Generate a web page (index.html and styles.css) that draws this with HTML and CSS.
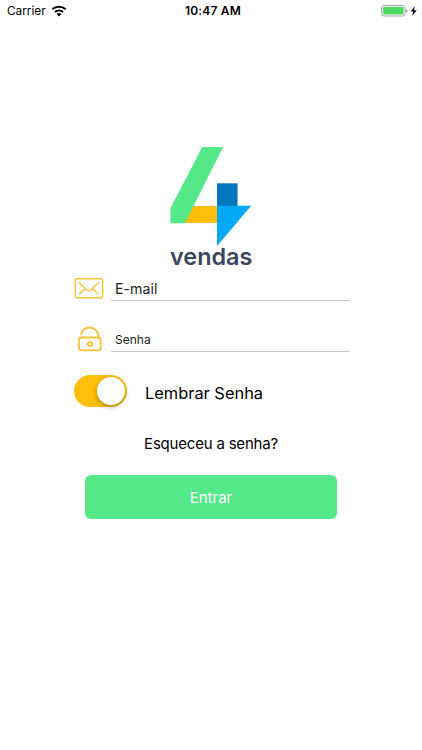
FILE: index.html
```html
<!DOCTYPE html>
<html lang="pt-BR">
<head>
	<meta charset="utf-8">
	<meta name="viewport" content="width=device-width, initial-scale=1">
	<title>4vendas</title>
	<link rel="stylesheet" href="styles.css">
</head>
<body>
<header class="statusbar">
	<div class="carrier">
		<span>Carrier</span>
		<svg width="16" height="12" viewBox="0 0 16 12">
			<path d="M1.4 4.3a9.6 9.6 0 0 1 13.2 0M3.9 7a6 6 0 0 1 8.2 0" fill="none" stroke="#000" stroke-width="2"/>
			<path d="M5.6 9.1a3.6 3.6 0 0 1 4.8 0L8 11.6z"/>
		</svg>
	</div>
	<div class="clock">10:47 AM</div>
	<div class="battery">
		<svg width="38" height="12" viewBox="0 0 38 12">
			<rect x=".5" y=".5" width="23.5" height="10.5" rx="2.5" fill="#fff" stroke="#a3a3a3"/>
			<rect x="2" y="2" width="20.5" height="7.5" rx="1.2" fill="#4cd964"/>
			<path d="M25.2 4v4q1.4-.7 1.4-2t-1.4-2z" fill="#a3a3a3"/>
			<path d="M34 1l-4.3 5.5h2.7L31.2 11l4.5-5.7h-2.8z"/>
		</svg>
	</div>
</header>

<main class="login">
	<div class="logo">
		<svg width="82" height="100" viewBox="0 0 82 100">
			<path d="M21.5 60H47v17H14z" fill="#fdbf0b"/>
			<path d="M32.2 1h21L14.8 77.2H.5V62.2z" fill="#54e888"/>
			<path d="M47 37.3h20.6V60H47z" fill="#0277bd"/>
			<path d="M47 59.8h34.2L47 100z" fill="#03a9f4"/>
		</svg>
		<div class="brand">vendas</div>
	</div>

	<form>
		<div class="field email">
			<svg width="30" height="21" viewBox="0 0 30 21">
				<rect x="1.2" y=".8" width="27.4" height="19" rx="1.5"/>
				<path d="M5 4.5l8.500 8q1.300 1.100 2.600 0l8.500-8M5.500 15.800l5.500-5.200M24 15.800l-5.500-5.200"/>
			</svg>
			<input type="text" placeholder="E-mail">
		</div>
		<div class="field password">
			<svg width="30" height="26" viewBox="0 0 30 26">
				<rect x="5" y="11.5" width="21.7" height="12.8" rx="2.5"/>
				<path d="M7 8.3C8.5 4 11.5 1.5 15.5 1.5c5 0 9 3.700 9 9.800"/>
				<ellipse cx="16" cy="18" rx="2.3" ry="1.8"/>
			</svg>
			<input type="password" placeholder="Senha">
		</div>
		<div class="remember">
			<div class="switch"><div class="knob"></div></div>
			<span>Lembrar Senha</span>
		</div>
		<a class="forgot">Esqueceu a senha?</a>
		<button type="button" class="enter">Entrar</button>
	</form>
</main>
</body>
</html>
```
FILE: styles.css
```css
*{
	padding: 0px;
	margin: 0px;
	box-sizing: border-box;
}
body{
	height: 750px;
	background-color: white;
	font-family: Inter, "Liberation Sans", sans-serif;
	color: black;
	overflow: hidden;
}
svg{
	display: block;
	flex: none;
}
.statusbar{
	height: 22px;
	padding: 0 3px 0 7px;
	display: grid;
	grid-template-columns: 1fr auto 1fr;
	align-items: center;
	font-size: 11.8px;
}
.carrier{
	display: flex;
	align-items: center;
	gap: 5px;
}
.clock{
	font-size: 12px;
	font-weight: 600;
	letter-spacing: 0.2px;
	padding-bottom: 1px;
}
.battery{
	display: flex;
	justify-content: flex-end;
}
.logo{
	width: 82px;
	margin: 124px 0 0 170px;
}
.brand{
	height: 30px;
	line-height: 22px;
	font-size: 23.4px;
	font-weight: 600;
	color: #3c465f;
	white-space: nowrap;
}
form{
	margin-left: 74px;
	width: 276px;
}
.field{
	display: flex;
	gap: 7px;
}
.field svg{
	fill: none;
	stroke: #fbc235;
	stroke-width: 1.4;
	stroke-linecap: round;
}
.email{
	margin-top: 1px;
	height: 24px;
}
.email svg{
	margin-top: 1px;
}
.password{
	margin-top: 25px;
	height: 26px;
}
.password svg{
	stroke-width: 1.8;
}
.field input{
	width: 239px;
	height: 100%;
	border: none;
	border-bottom: 1px solid #c8c8cc;
	padding: 0 0 1px 4px;
	background: none;
	font-family: inherit;
	font-size: 14.2px;
	outline: none;
}
.password input{
	font-size: 12px;
	padding: 2px 0 0 4px;
}
.field input::placeholder{
	color: #222;
	opacity: 1;
}
.remember{
	display: flex;
	align-items: center;
	gap: 18px;
	margin-top: 23px;
	height: 32px;
	font-size: 16.4px;
}
.remember span{
	padding-top: 4px;
}
.switch{
	display: flex;
	justify-content: flex-end;
	align-items: center;
	width: 53px;
	height: 32px;
	padding-right: 2px;
	border-radius: 16px;
	background-color: #fdbf0b;
}
.knob{
	width: 28px;
	height: 28px;
	border-radius: 50%;
	background-color: white;
	box-shadow: 0 2px 5px rgba(0, 0, 0, 0.3);
}
.forgot{
	display: block;
	width: 274px;
	margin-top: 27px;
	line-height: 20px;
	font-size: 15px;
	letter-spacing: -0.2px;
	text-align: center;
}
.enter{
	display: block;
	width: 252px;
	height: 44px;
	margin: 21px 0 0 11px;
	border: none;
	border-radius: 6px;
	background-color: #54e888;
	color: white;
	font-family: inherit;
	font-size: 15px;
}
```
